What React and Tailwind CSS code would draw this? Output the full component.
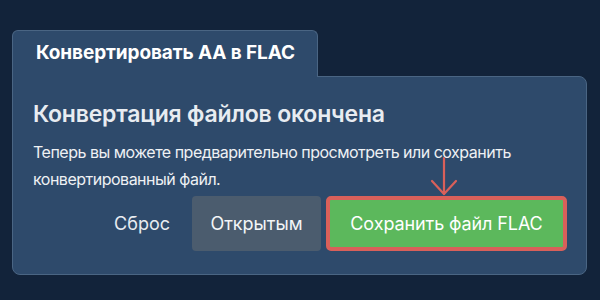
export default function App() {
  return (
    <div className="w-[600px] h-[300px] bg-[#12233a] pt-[30px] pl-[12px] font-['Inter',sans-serif]">
      <div className="relative z-10 -mb-px w-[306px] h-[47px] bg-[#2e4a6b] border border-b-0 border-[#4a6583] rounded-t-[6px] flex items-center pl-[23px] pb-[1px]">
        <span className="text-white font-bold text-[19px] tracking-[-0.1px]">Конвертировать АА в FLAC</span>
      </div>
      <div className="relative w-[575px] h-[199px] bg-[#2e4a6b] border border-[#4a6583] rounded-b-[8px] rounded-tr-[8px] pt-[22px] pl-[20px] pr-[19px]">
        <h1 className="text-[#e8ecf1] font-semibold text-[23px] leading-[30px] tracking-[-0.2px]">Конвертация файлов окончена</h1>
        <p className="mt-[10px] text-[#eef1f4] text-[16px] leading-[27px] tracking-[-0.5px] w-[520px]">
          Теперь вы можете предварительно просмотреть или сохранить конвертированный файл.
        </p>
        <div className="mt-[3px] flex justify-end items-center">
          <button className="h-[55px] px-[22px] text-[#e8ecf1] text-[18px]">Сброс</button>
          <button className="h-[55px] w-[129px] rounded-[4px] bg-[#4b5c6e] text-[#f3f5f7] text-[18px]">Открытым</button>
          <button className="relative ml-[5px] h-[55px] w-[241px] rounded-[5px] border-[4px] border-[#d9605a] bg-[#5cb85c] text-white text-[18px] tracking-[-0.1px]">
            Сохранить файл FLAC
            <svg className="absolute left-[100px] -top-[44px]" width="30" height="40" viewBox="0 0 30 40" fill="none" stroke="#d9605a" strokeWidth="2.2" strokeLinecap="round" strokeLinejoin="round">
              <path d="M14 2V38" />
              <path d="M2 25L14 38L26 25" />
            </svg>
          </button>
        </div>
      </div>
    </div>
  );
}
